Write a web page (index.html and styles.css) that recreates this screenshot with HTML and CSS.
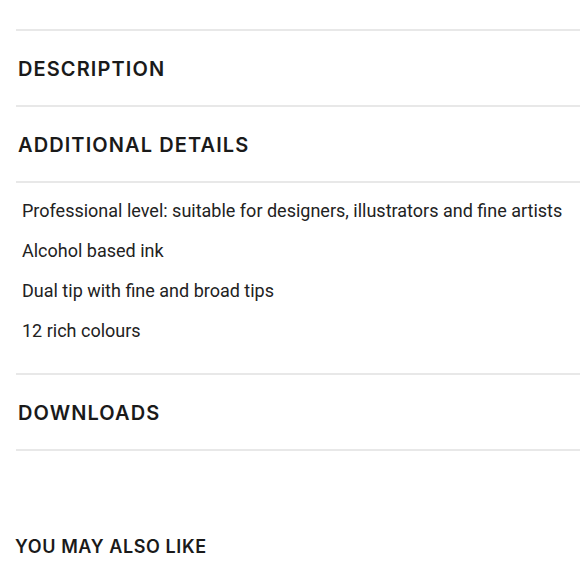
FILE: index.html
```html
<!DOCTYPE html>
<html>
<head>
<meta charset="utf-8">
<link rel="stylesheet" href="styles.css">
</head>
<body>
<div class="page">
  <div class="accordion">
    <div class="acc-item"><div class="acc-head">DESCRIPTION</div></div>
    <div class="acc-item open">
      <div class="acc-head">ADDITIONAL DETAILS</div>
      <ul class="acc-body">
        <li>Professional level: suitable for designers, illustrators and fine artists</li>
        <li>Alcohol based ink</li>
        <li>Dual tip with fine and broad tips</li>
        <li>12 rich colours</li>
      </ul>
    </div>
    <div class="acc-item"><div class="acc-head">DOWNLOADS</div></div>
  </div>
  <h2 class="related">YOU MAY ALSO LIKE</h2>
</div>
</body>
</html>
```
FILE: styles.css
```css
html, body {
  margin: 0;
  padding: 0;
  background: #ffffff;
}
.page {
  padding-top: 29px;
}
.accordion {
  margin-left: 16px;
  border-bottom: 2px solid #e8e8e8;
}
.acc-item {
  border-top: 2px solid #e8e8e8;
}
.acc-head {
  height: 74px;
  box-sizing: border-box;
  padding: 2px 0 0 2px;
  display: flex;
  align-items: center;
  font-family: Inter, sans-serif;
  font-weight: 600;
  font-size: 20px;
  letter-spacing: 1.1px;
  color: #1a1a1a;
}
.acc-body {
  list-style: none;
  margin: 0;
  padding: 8px 0 22px 6px;
  border-top: 2px solid #e8e8e8;
  font-family: Roboto, sans-serif;
  font-size: 18px;
  line-height: 40px;
  color: #222222;
}
.related {
  margin: 85px 0 0 15px;
  font-family: Inter, sans-serif;
  font-weight: 600;
  font-size: 18px;
  letter-spacing: 0.6px;
  color: #1a1a1a;
}
```
